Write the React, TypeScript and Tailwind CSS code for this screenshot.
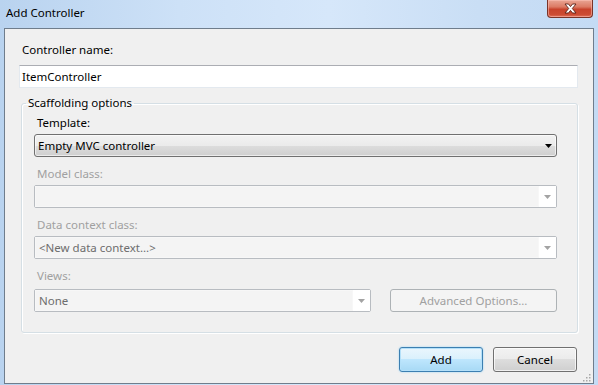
import React from "react";

const font = { fontFamily: '"Noto Sans", "Open Sans", "Liberation Sans", sans-serif' };

function Arrow({ color }: { color: string }) {
  return (
    <svg width="7" height="4" viewBox="0 0 7 4" className="block">
      <path d="M0 0 H7 L3.5 4 Z" fill={color} />
    </svg>
  );
}

function DisabledCombo({ text, width }: { text?: string; width: string }) {
  return (
    <div className={`flex h-[23px] ${width} rounded-[2px] border border-[#b8bcc1] bg-[#f4f4f4]`}>
      <div className="flex flex-1 items-center pl-[3px] text-[#6d6d6d] border border-[#f7f7f7]">{text}</div>
      <div className="flex w-[17px] items-center justify-center bg-white">
        <Arrow color="#a3a3a3" />
      </div>
    </div>
  );
}

export default function App() {
  return (
    <div
      className="flex h-[385px] w-[598px] flex-col overflow-hidden bg-[linear-gradient(90deg,#b9d3ef_0%,#cde1f7_30%,#d6e7fa_55%,#c9def5_80%,#c4dbf4_100%)] text-[11.5px] leading-[16px] text-black"
      style={font}
    >
      {/* Title bar */}
      <div className="flex h-[28px] shrink-0 items-start">
        <div className="pl-[6px] pt-[5px] text-[11.5px] leading-[16px] text-black">Add Controller</div>
        <div className="ml-auto mr-[5px] flex h-[18px] w-[46px] items-center justify-center rounded-b-[4px] border border-t-0 border-[#7a3428] bg-[linear-gradient(180deg,#e9a594_0%,#dc7b65_40%,#c8432c_55%,#cc4c33_85%,#e0705a_100%)] shadow-[inset_0_0_0_1px_rgba(255,200,190,0.5)]">
          <svg width="13" height="11" viewBox="0 0 13 11">
            <path
              d="M1 1 H4.5 L6.5 3.6 L8.5 1 H12 L8.3 5.5 L12 10 H8.5 L6.5 7.4 L4.5 10 H1 L4.7 5.5 Z"
              fill="#ffffff"
              stroke="#5a2017"
              strokeWidth="0.9"
              strokeLinejoin="round"
            />
          </svg>
        </div>
      </div>

      {/* Client area */}
      <div className="mx-[4px] flex h-[356px] flex-col border border-[#6f7d8c] bg-[#f0f0f0]">
        <div className="ml-[17px] mt-[13px]">Controller name:</div>
        <div className="ml-[14px] mt-[7px] flex h-[23px] w-[559px] items-center border border-[#e3e9ef] border-t-[#abadb3] bg-white pl-[2px]">
          ItemController
        </div>

        <fieldset className="ml-[16px] mt-[7px] h-[238px] w-[557px] rounded-[3px] border border-[#d5dfe5] shadow-[1px_1px_0_#ffffff,inset_1px_1px_0_#ffffff]">
          <legend className="ml-[4px] px-[2px]">Scaffolding options</legend>
          <div className="ml-[15px] mt-[4px]">Template:</div>
          <div className="ml-[12px] mt-[3px] flex h-[23px] w-[523px] items-center rounded-[3px] border border-[#707070] bg-[linear-gradient(180deg,#f2f2f2_0%,#ebebeb_50%,#dddddd_50%,#cfcfcf_100%)] pl-[3px] shadow-[inset_0_0_0_1px_rgba(255,255,255,0.6)]">
            <span className="flex-1">Empty MVC controller</span>
            <span className="mr-[4px]">
              <Arrow color="#000000" />
            </span>
          </div>

          <div className="ml-[15px] mt-[9px] text-[#a0a0a0]">Model class:</div>
          <div className="ml-[12px] mt-[3px]">
            <DisabledCombo width="w-[523px]" />
          </div>

          <div className="ml-[15px] mt-[9px] text-[#a0a0a0]">Data context class:</div>
          <div className="ml-[12px] mt-[3px]">
            <DisabledCombo width="w-[523px]" text="<New data context...>" />
          </div>

          <div className="ml-[15px] mt-[9px] text-[#a0a0a0]">Views:</div>
          <div className="ml-[12px] mt-[5px] flex gap-[19px]">
            <DisabledCombo width="w-[337px]" text="None" />
            <div className="flex h-[23px] w-[167px] items-center justify-center rounded-[3px] border border-[#adb2b5] bg-[#f4f4f4] text-[#a0a0a0]">
              Advanced Options...
            </div>
          </div>
        </fieldset>

        <div className="mr-[16px] mt-[14px] flex justify-end gap-[10px]">
          <div className="flex h-[25px] w-[84px] items-center justify-center rounded-[3px] border border-[#3c7fb1] bg-[linear-gradient(180deg,#eaf6fd_0%,#d9f0fc_50%,#bee6fd_50%,#a7d9f5_100%)] shadow-[inset_0_0_0_1px_#b4e0f9,0_0_2px_#8fd0f5]">
            Add
          </div>
          <div className="flex h-[25px] w-[84px] items-center justify-center rounded-[3px] border border-[#707070] bg-[linear-gradient(180deg,#f2f2f2_0%,#ebebeb_50%,#dddddd_50%,#cfcfcf_100%)] shadow-[inset_0_0_0_1px_rgba(255,255,255,0.7)]">
            Cancel
          </div>
        </div>

        <div className="mr-[2px] mt-auto mb-[1px] flex justify-end">
          <svg width="9" height="9" viewBox="0 0 9 9">
            {[
              [7, 1],
              [4, 4],
              [7, 4],
              [1, 7],
              [4, 7],
              [7, 7],
            ].map(([x, y], i) => (
              <rect key={i} x={x} y={y} width="1.5" height="1.5" fill="#a8a8a8" />
            ))}
          </svg>
        </div>
      </div>
    </div>
  );
}
